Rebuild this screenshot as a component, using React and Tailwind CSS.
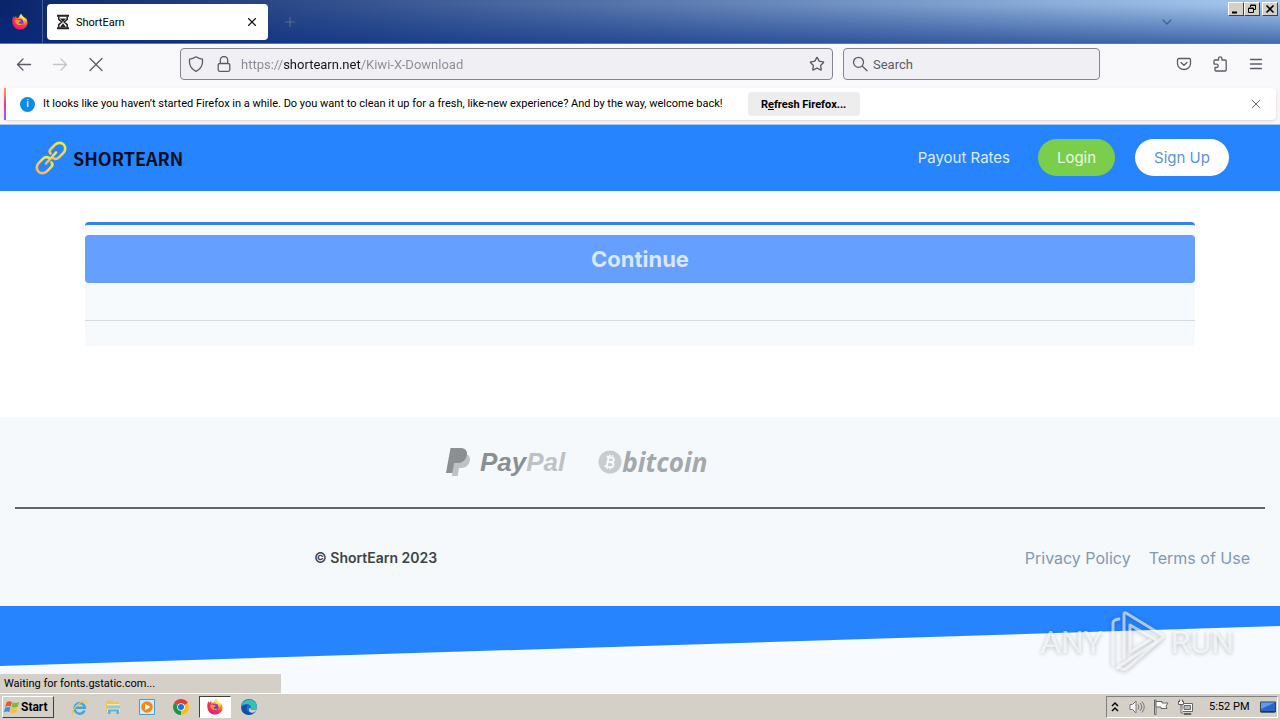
import { useState } from 'react';
import { X, Star, ChevronDown, Plus } from 'lucide-react';

function FirefoxIcon({ className }) {
  return (
    <svg className={className} viewBox="0 0 32 32" aria-hidden="true">
      <defs>
        <radialGradient id="ff-body" cx="0.78" cy="0.16" r="0.95">
          <stop offset="0.1" stopColor="#fff44f" />
          <stop offset="0.38" stopColor="#ff980e" />
          <stop offset="0.65" stopColor="#ff3647" />
          <stop offset="1" stopColor="#e31587" />
        </radialGradient>
        <radialGradient id="ff-globe" cx="0.5" cy="0.2" r="0.8">
          <stop offset="0" stopColor="#b833e1" />
          <stop offset="1" stopColor="#592acb" />
        </radialGradient>
      </defs>
      <path d="M30 12c-1-2.400-2.600-4.400-4.200-5.400.9 1.600 1.300 2.900 1.500 4C25 6 20.600 4.600 18.600 0c-2.800 1.700-3.900 4.700-4 6.600-1.800.1-3.400.7-4.700 1.600-1-.9-1.600-2.400-1.300-4.400C6.800 4.700 5.500 6.200 4.600 7.500 3.800 7 3.800 4.600 3.900 4 2.600 5.200 1 8.600.8 10.600-.8 22.400 6.200 31 16 31c9.600 0 18-8.200 14-19z" fill="url(#ff-body)" />
      <circle cx="16" cy="16.500" r="6.800" fill="url(#ff-globe)" />
      <path d="M6 13c3-2.500 6-1.500 7.500-.4 2 0 3.500.4 3.500 1.200 0 1-1.800 1.700-3.400 2.200-.4 1.800.4 3 2.400 3.600 2.500.6 4-1.200 6-.6-1.500 2.800-4.600 4.200-8 3.400C9 21.500 6.500 18 6 13z" fill="#ff9a1f" />
      <path d="M18.600 0c-2.800 1.700-3.900 4.700-4 6.600 5 .2 9.400 4 9.200 9.400 1.600-4.600.2-7.600-1.800-9.800C20.200 4.200 19 2.500 18.600 0z" fill="#ffe14a" />
    </svg>
  );
}

function HourglassIcon() {
  return (
    <svg className="h-4 w-4" viewBox="0 0 16 16" fill="none" stroke="#222" strokeWidth="1.500" aria-hidden="true">
      <path d="M2 1.800h12M2 14.200h12" strokeWidth="2" />
      <path d="M3.800 2.500v2.800l3 2.700-3 2.700v2.800M12.200 2.500v2.800l-3 2.700 3 2.700v2.800" />
      <path d="M5 4.500h6L8 8zM5 13.200l3-4 3 4z" fill="#222" stroke="none" />
    </svg>
  );
}

// 16px outline icons of the browser toolbar
function ToolIcon({ children }) {
  return (
    <svg className="h-4 w-4 shrink-0" viewBox="0 0 16 16" fill="none" stroke="currentColor" strokeWidth="1.300" strokeLinecap="round" strokeLinejoin="round" aria-hidden="true">
      {children}
    </svg>
  );
}

function ChainIcon() {
  return (
    <svg className="h-9 w-9" viewBox="0 0 36 36" fill="none" strokeWidth="2.600" strokeLinecap="round" aria-hidden="true">
      <defs>
        <linearGradient id="chain" x1="0" y1="1" x2="1" y2="0">
          <stop offset="0" stopColor="#f6b26b" />
          <stop offset="0.5" stopColor="#f3d45c" />
          <stop offset="1" stopColor="#e8f531" />
        </linearGradient>
      </defs>
      <g stroke="url(#chain)">
        <path d="M17.500 13.500c-1.600-1.800-.8-3.400.4-4.600l4-4c2.600-2.700 6.400-2.600 8.600-.5 2.400 2.300 2.300 6.200-.3 8.700l-4 4c-2 2-4.200 2.200-6.300 1" />
        <path d="M18.500 22.500c1.600 1.800.8 3.400-.4 4.600l-4 4c-2.600 2.700-6.400 2.600-8.600.5-2.400-2.300-2.300-6.200.3-8.700l4-4c2-2 4.200-2.200 6.300-1" />
        <path d="M13 23.500l10-11" />
      </g>
    </svg>
  );
}

function PaypalMark() {
  return (
    <svg className="h-7 w-6" viewBox="0 0 24 28" aria-hidden="true">
      <path d="M8 6h12c3.500 1 4.600 4 3.600 7.500C22.500 18 19 20 15 20h-2l-1.300 8H6z" fill="#bfc2c5" />
      <path d="M4.500 0H14c5 0 7.600 2.600 6.900 7-1 5.600-4.600 8-10 8H8L6.400 25H0z" fill="#8b8f92" />
    </svg>
  );
}

function BitcoinMark() {
  return (
    <svg className="h-6 w-6" viewBox="0 0 24 24" aria-hidden="true">
      <circle cx="12" cy="12" r="11.500" fill="#c9ccce" />
      <g transform="rotate(12 12 12)" fill="none" stroke="#f5f9fd" strokeWidth="2">
        <path d="M7.500 7.300H13a2.300 2.300 0 0 1 0 4.600H9.500M9.500 12H13.500a2.500 2.500 0 0 1 0 5H7.500M9.700 7v10" />
        <path d="M10.500 4.800V7M13.200 4.800V7M10.500 17v2.300M13.200 17v2.300" strokeWidth="1.500" />
      </g>
    </svg>
  );
}

function AnyRunMark() {
  return (
    <svg className="h-16 w-14" viewBox="0 0 56 64" fill="none" stroke="currentColor" strokeWidth="3" strokeLinejoin="round" strokeLinecap="round" aria-hidden="true">
      <path d="M15 49V4q0-2 2-1l36 22q2 1.500 0 3L18 58q-3 2-5 1-2-2-4-1" />
      <path d="M4 54V13q0-3 6-4" />
      <path d="M21 42V15l26 15M21 42l20-12M9 57l38-25" />
    </svg>
  );
}

function WindowButton({ label, children }) {
  return (
    <button aria-label={label} className="flex h-[14px] w-4 items-center justify-center border border-t-white border-l-white border-r-[#404040] border-b-[#404040] bg-[#d4d0c8]">
      <svg className="h-[10px] w-[10px]" viewBox="0 0 10 10" fill="none" stroke="#000" aria-hidden="true">
        {children}
      </svg>
    </button>
  );
}

function TitleBar() {
  return (
    <div className="flex h-11 items-start border-b border-[#6a7590] bg-[linear-gradient(to_bottom,rgba(10,36,106,0)_10%,rgba(5,45,130,0.6)),linear-gradient(to_right,#0a246a,#a6caf0)]">
      <div className="flex h-full w-[43px] items-center justify-center border-r border-[#4a5c92] pr-[2px]">
        <FirefoxIcon className="h-4 w-4" />
      </div>
      <div className="mt-1 ml-1 flex h-9 w-[221px] items-center rounded bg-white px-2">
        <HourglassIcon />
        <span className="ml-[5px] flex-1 pt-[2px] text-[11px] text-black">ShortEarn</span>
        <button aria-label="Close tab" className="flex h-4 w-4 items-center justify-center">
          <X className="h-[14px] w-[14px]" color="#15141a" strokeWidth={2} />
        </button>
      </div>
      <button aria-label="New tab" className="mt-[14px] ml-[14px]">
        <Plus className="h-4 w-4" color="#5e6e85" strokeWidth={1.5} />
      </button>
      <button aria-label="List all tabs" className="mt-[14px] ml-auto">
        <ChevronDown className="h-4 w-4" color="#45618f" strokeWidth={2} />
      </button>
      <div className="mt-[2px] mr-[2px] ml-[53px] flex">
        <WindowButton label="Minimize"><path d="M1 8.500h5" strokeWidth="2" /></WindowButton>
        <WindowButton label="Restore"><path d="M3.500 3V1h5v4.500H7M1.500 4h5v4.500h-5zM3 1.500h6M1 4.500h6" /></WindowButton>
        <span className="w-[2px]" />
        <WindowButton label="Close"><path d="M1.500 1.500l7 7M8.500 1.500l-7 7" strokeWidth="1.600" /></WindowButton>
      </div>
    </div>
  );
}

function Toolbar() {
  const [url, setUrl] = useState('https://shortearn.net/Kiwi-X-Download');
  return (
    <div className="flex h-11 items-center bg-[#f9f9fb] px-4 pb-1 text-[#5b5b66]">
      <div className="flex w-[164px] gap-5">
        <button aria-label="Back"><ToolIcon><path d="M14.500 8.500H1.500M7 3l-5.500 5.500L7 14" /></ToolIcon></button>
        <button aria-label="Forward" className="text-[#c4c4ca]"><ToolIcon><path d="M1.500 8.500h13M9 3l5.500 5.500L9 14" /></ToolIcon></button>
        <button aria-label="Stop"><ToolIcon><path d="M2 2.500l12 12M14 2.500l-12 12" /></ToolIcon></button>
      </div>
      <div className="flex h-8 flex-1 items-center rounded border border-[#85858f] bg-[#f0f0f4] px-[7px]">
        <ToolIcon><path d="M8 .8q3 2 6.500 2.400v3.300Q14 12.500 8 15.300 2 12.500 1.500 6.500V3.200Q5 2.800 8 .8z" /></ToolIcon>
        <span className="w-3" />
        <ToolIcon><path d="M4.300 7.500V4.200a3.700 3.700 0 0 1 7.400 0v3.300M3.700 7.500h8.600a1.500 1.500 0 0 1 1.500 1.500v4.800a1.500 1.500 0 0 1-1.500 1.500H3.700a1.500 1.500 0 0 1-1.500-1.500V9a1.500 1.500 0 0 1 1.500-1.500z" /></ToolIcon>
        <input
          aria-label="Address"
          value={url}
          onChange={(e) => setUrl(e.target.value)}
          className="ml-[9px] flex-1 bg-[linear-gradient(to_right,#8a8a94_42px,#15141a_42px,#15141a_120px,#8a8a94_120px)] bg-clip-text pt-[2px] text-[13px] text-transparent outline-none"
        />
        <Star className="h-4 w-4" strokeWidth={2} />
      </div>
      <div className="ml-[10px] flex h-8 w-[257px] items-center rounded border border-[#85858f] bg-[#f0f0f4] px-2">
        <ToolIcon><path d="M6.500 1.300a5 5 0 1 1 0 10 5 5 0 0 1 0-10zM10.200 10l4.800 4.700" /></ToolIcon>
        <input aria-label="Search" placeholder="Search" className="ml-[5px] flex-1 pt-[2px] text-[13px] outline-none placeholder:text-[#5b5b66]" />
      </div>
      <div className="ml-[76px] flex gap-5">
        <button aria-label="Pocket">
          <ToolIcon>
            <path d="M3 2.500h10a1.500 1.500 0 0 1 1.500 1.500v3.500a6.500 6 0 0 1-13 0V4A1.500 1.500 0 0 1 3 2.500z" />
            <path d="M5 6.500l3 2.800 3-2.800" />
          </ToolIcon>
        </button>
        <button aria-label="Extensions">
          <ToolIcon>
            <path d="M6.500 4V2.500a1.700 1.700 0 0 1 3.400 0V4h3.300a1 1 0 0 1 1 1v9a1 1 0 0 1-1 1H4a1 1 0 0 1-1-1v-2.500h1.500a1.700 1.700 0 0 0 0-3.400H2V5a1 1 0 0 1 1-1z" />
          </ToolIcon>
        </button>
        <button aria-label="Menu"><ToolIcon><path d="M2.500 3.500h11M2.500 8h11M2.500 12.500h11" /></ToolIcon></button>
      </div>
    </div>
  );
}

function InfoBar() {
  return (
    <div className="h-[37px] border-b border-[#9ccbff] bg-[#f9f4f5] px-1">
      <div className="flex h-8 items-center rounded-sm bg-white pr-3 shadow-sm">
        <span className="h-full w-[2px] bg-linear-to-b from-[#ff9a56] via-[#e8388a] to-[#9059ff]" />
        <span className="ml-[14px] flex h-[15px] w-[15px] items-center justify-center rounded-full bg-[#0a8ce9] text-[11px] text-white">i</span>
        <p className="ml-2 text-[11px] whitespace-nowrap text-black">
          It looks like you haven’t started Firefox in a while. Do you want to clean it up for a fresh, like-new experience? And by the way, welcome back!
        </p>
        <button className="ml-[25px] h-6 w-28 rounded bg-[#ededee] pt-[2px] text-[11px] font-bold whitespace-nowrap text-black">
          R<span className="underline">e</span>fresh Firefox...
        </button>
        <button aria-label="Dismiss" className="ml-auto">
          <X className="h-4 w-4 scale-90" color="#5b5b66" strokeWidth={1.6} />
        </button>
      </div>
    </div>
  );
}

function SiteHeader() {
  return (
    <header className="flex h-[66px] items-center bg-[#2684ff] pr-[51px] pb-px pl-[33px] font-[Inter,sans-serif] text-[15px]">
      <a href="#home" className="flex items-center gap-1">
        <ChainIcon />
        <span className="font-['Noto_Sans_CJK_SC',sans-serif] text-[18px] leading-6 font-bold text-[#06101f]">SHORTEARN</span>
      </a>
      <nav className="ml-auto flex items-center">
        <a href="#rates" className="pt-[2px] text-[#dcebff]">Payout Rates</a>
        <a href="#login" className="ml-7 flex h-[37px] w-[77px] items-center justify-center rounded-full bg-[#7ace4c] pt-[2px] text-[#eefae6]">Login</a>
        <a href="#signup" className="ml-5 flex h-[37px] w-[94px] items-center justify-center rounded-full bg-white pt-[2px] text-[#5c92de]">Sign Up</a>
      </nav>
    </header>
  );
}

function SiteFooter() {
  return (
    <footer className="bg-[#f5f9fc] px-[15px] font-[Inter,sans-serif]">
      <div className="flex h-[90px] items-center gap-[33px] pl-[431px]">
        <div className="flex items-center gap-[10px]">
          <PaypalMark />
          <span className="font-['Liberation_Sans',sans-serif] text-[26px] leading-8 font-bold text-[#8b8f92] italic">
            Pay<span className="text-[#bfc2c5]">Pal</span>
          </span>
        </div>
        <div className="flex items-center">
          <BitcoinMark />
          <span className="font-['Open_Sans',sans-serif] text-[26px] leading-8 font-bold text-[#a5a8aa] italic">bitcoin</span>
        </div>
      </div>
      <div className="flex h-[99px] items-center border-t-2 border-[#61666b] pr-[15px]">
        <p className="ml-[299px] text-[14px] font-semibold text-[#3d4348]">© ShortEarn 2023</p>
        <div className="ml-auto flex gap-[18px] text-[16px] text-[#8298b3]">
          <a href="#privacy">Privacy Policy</a>
          <a href="#terms">Terms of Use</a>
        </div>
      </div>
    </footer>
  );
}

function Watermark() {
  return (
    <div className="absolute top-1 right-[46px] flex items-center gap-[6px] text-[32px] font-normal text-white/60 drop-shadow-[0_1px_2px_rgba(0,0,0,0.4)]">
      <span>ANY</span>
      <AnyRunMark />
      <span>RUN</span>
    </div>
  );
}

function TaskIcon({ label, active, children }) {
  return (
    <button
      aria-label={label}
      className={active
        ? 'flex h-[22px] w-8 items-center justify-center border border-t-[#404040] border-l-[#404040] border-r-white border-b-white bg-white'
        : 'flex h-[22px] w-8 items-center justify-center'}
    >
      {children}
    </button>
  );
}

function Taskbar() {
  return (
    <div className="flex h-[27px] items-center border-t border-white bg-[#d4d0c8] px-[2px] text-black">
      <button className="flex h-[22px] w-[52px] items-center gap-px border border-t-white border-l-white border-r-[#404040] border-b-[#404040] pl-px text-[12px] font-bold">
        <svg className="h-4 w-4 shrink-0" viewBox="0 0 16 16" aria-hidden="true">
          <path d="M2.500 3.500Q5 1.500 8 3L6.800 7.600Q4 6.400 1.200 8z" fill="#e8582a" />
          <path d="M8.800 3.300Q11.500 4.600 15 3l-1.300 4.800Q10.500 9 7.600 7.900z" fill="#7db93a" />
          <path d="M1 8.800Q3.800 7.300 6.500 8.500L5.300 13Q2.500 11.800 0 13.500z" fill="#3f8fdc" />
          <path d="M7.400 8.800Q10.300 10 13.400 8.700L12.200 13.200Q9 14.600 6.200 13.300z" fill="#f7c22c" />
        </svg>
        Start
      </button>
      <div className="ml-[9px] flex gap-[2px]">
        <TaskIcon label="Internet Explorer">
          <svg className="h-[17px] w-[17px]" viewBox="0 0 17 17" fill="none" aria-hidden="true">
            <path d="M13.600 11.500A5.300 5.300 0 1 1 14 8.800H5" stroke="#3ea6e6" strokeWidth="2.400" />
            <path d="M2.500 15.500C-.5 14.500 3 8 8 4.500S16.500.5 15.500 4" stroke="#f0c54a" strokeWidth="1.300" />
          </svg>
        </TaskIcon>
        <TaskIcon label="Explorer">
          <svg className="h-4 w-4" viewBox="0 0 16 16" aria-hidden="true">
            <path d="M1 3l1-1.500h5L8 3h6v10H1z" fill="#e6c860" />
            <path d="M2 5h13v8H2z" fill="#f8e8a0" />
            <path d="M2 6.500h13v3H2z" fill="#8bcbe6" />
            <path d="M3 15v-4.500h11V15h-2.500v-2.500h-6V15z" fill="#5eaed8" />
          </svg>
        </TaskIcon>
        <TaskIcon label="Media Player">
          <svg className="h-4 w-4" viewBox="0 0 16 16" aria-hidden="true">
            <path d="M.5.5h15v15H.5z" fill="#d8ebf8" stroke="#4d9cd0" />
            <circle cx="8" cy="8" r="5.800" fill="#f08a1c" />
            <path d="M6.200 4.800v6.400L11.300 8z" fill="#fff" />
          </svg>
        </TaskIcon>
        <TaskIcon label="Chrome">
          <svg className="h-4 w-4" viewBox="0 0 16 16" aria-hidden="true">
            <path d="M8 8L1.100 4a8 8 0 0 1 13.800 0z" fill="#e33b2e" />
            <path d="M8 8L14.900 4A8 8 0 0 1 8 16z" fill="#fbc116" />
            <path d="M8 8v8A8 8 0 0 1 1.100 4z" fill="#229342" />
            <circle cx="8" cy="8" r="3.800" fill="#fff" />
            <circle cx="8" cy="8" r="3" fill="#1a73e8" />
          </svg>
        </TaskIcon>
        <TaskIcon label="Firefox" active>
          <FirefoxIcon className="h-4 w-4" />
        </TaskIcon>
        <TaskIcon label="Edge">
          <svg className="h-4 w-4" viewBox="0 0 16 16" aria-hidden="true">
            <circle cx="8" cy="8" r="8" fill="#1b6fc9" />
            <path d="M.3 7A8 8 0 0 1 16 7.500c0 2.500-2 3.600-4 3.600s-2.800-.8-2-1.900C10.500 7 8.500 5 5.500 5 3 5 1 6 .3 7z" fill="#35c1b1" />
            <path d="M5.500 8.500C5 12 8 15 13 13.800c-5 4-12 1.500-12.500-4C.7 7 4 5.200 7 6.200 6 6.500 5.600 7.400 5.500 8.500z" fill="#0f4fa8" />
            <path d="M9.800 9.200c-.8 1.100 0 1.900 2.200 1.900 1.600 0 3-.6 3.600-1.700-.4 2-2 3.800-3.600 4.300-2.600.4-4.500-1.600-4-3.400.2-1 1-1.500 1.800-1.100z" fill="#d4d0c8" />
          </svg>
        </TaskIcon>
      </div>
      <div className="ml-auto flex h-[22px] w-[172px] items-center border border-t-[#808080] border-l-[#808080] border-r-white border-b-white pl-1 text-[11px]">
        <svg className="h-3 w-2" viewBox="0 0 8 12" fill="none" stroke="#000" strokeWidth="1.500" aria-hidden="true">
          <path d="M1 5l3-3 3 3M1 10l3-3 3 3" />
        </svg>
        <svg className="ml-[10px] h-4 w-4" viewBox="0 0 16 16" fill="none" stroke="#777" aria-hidden="true">
          <path d="M1 5.500h2.500L7 2v12l-3.500-3.500H1z" fill="#fff" />
          <path d="M9 5.500q2 2.500 0 5M11 4q3.500 4 0 8M13 2.500q4.500 5.500 0 11" />
        </svg>
        <svg className="ml-2 h-4 w-4" viewBox="0 0 16 16" stroke="#666" fill="#fff" aria-hidden="true">
          <path d="M1.500 1h1.500v14.500H1.500z" />
          <path d="M3 2.500h6v1.500h6l-2 3 1 2.500H8V8H3z" />
        </svg>
        <svg className="ml-2 h-4 w-4" viewBox="0 0 16 16" stroke="#666" fill="#fff" aria-hidden="true">
          <path d="M5 4.500h10.500v8H5z" />
          <path d="M7 6.500h6.500v4H7z" fill="#bbb" />
          <path d="M7 14.500h7v1H7z" />
          <path d="M1.500 2v3.500h5V2M2.500.5V3M5.500.5V3M4 6v8h2" />
        </svg>
        <span className="ml-4 whitespace-nowrap">5:52 PM</span>
        <svg className="mr-px ml-auto h-4 w-4 shrink-0" viewBox="0 0 16 16" aria-hidden="true">
          <path d="M.5 3h15v10H.5z" fill="#2c64c4" stroke="#31415e" />
          <path d="M1 3.500h14L1 10z" fill="#5f9be8" />
          <path d="M1 12h14v1.500H1z" fill="#26374f" />
        </svg>
      </div>
    </div>
  );
}

export default function App() {
  return (
    <div className="flex min-h-screen flex-col bg-white font-[Roboto,sans-serif]">
      <TitleBar />
      <Toolbar />
      <InfoBar />
      <div className="relative flex flex-1 flex-col">
        <SiteHeader />
        <main className="px-[85px] pt-[31px] pb-[71px]">
          <div className="rounded border-t-[3px] border-[#3583e6] bg-[#f7fafc] pt-[10px]">
            <button className="h-12 w-full rounded bg-[#659fff] font-[Inter,sans-serif] text-[22px] font-bold text-[#d9e7ff]">Continue</button>
            <div className="h-[38px] border-b border-[#d6dbdf]" />
            <div className="h-[25px]" />
          </div>
        </main>
        <SiteFooter />
        <section className="relative flex-1 bg-[#f7fbff]">
          <div className="h-[60px] bg-[#2684ff] [clip-path:polygon(0_0,100%_0,100%_20px,0_100%)]" />
          <Watermark />
        </section>
        <div className="absolute bottom-0 left-0 h-[19px] w-[281px] bg-[#d4d0c8] pl-1 text-[11px] leading-[19px] text-black">
          Waiting for fonts.gstatic.com...
        </div>
      </div>
      <Taskbar />
    </div>
  );
}
